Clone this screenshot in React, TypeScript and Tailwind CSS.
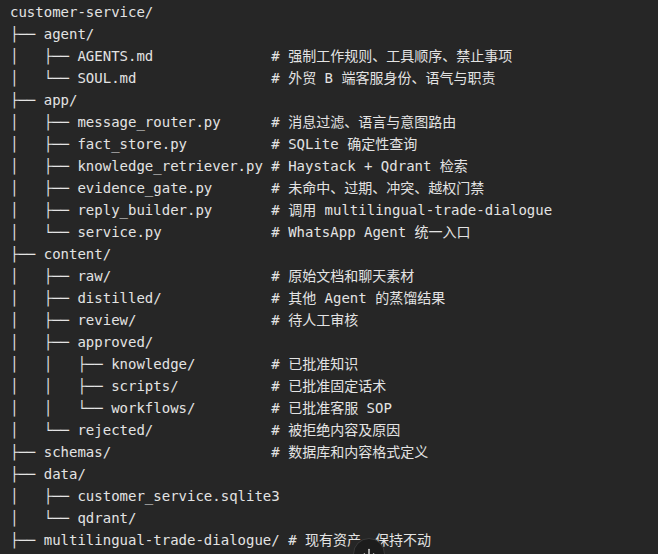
import { ArrowDown } from "lucide-react";

const lines = [
  "customer-service/",
  "├── agent/",
  "│   ├── AGENTS.md              # 强制工作规则、工具顺序、禁止事项",
  "│   └── SOUL.md                # 外贸 B 端客服身份、语气与职责",
  "├── app/",
  "│   ├── message_router.py      # 消息过滤、语言与意图路由",
  "│   ├── fact_store.py          # SQLite 确定性查询",
  "│   ├── knowledge_retriever.py # Haystack + Qdrant 检索",
  "│   ├── evidence_gate.py       # 未命中、过期、冲突、越权门禁",
  "│   ├── reply_builder.py       # 调用 multilingual-trade-dialogue",
  "│   └── service.py             # WhatsApp Agent 统一入口",
  "├── content/",
  "│   ├── raw/                   # 原始文档和聊天素材",
  "│   ├── distilled/             # 其他 Agent 的蒸馏结果",
  "│   ├── review/                # 待人工审核",
  "│   ├── approved/",
  "│   │   ├── knowledge/         # 已批准知识",
  "│   │   ├── scripts/           # 已批准固定话术",
  "│   │   └── workflows/         # 已批准客服 SOP",
  "│   └── rejected/              # 被拒绝内容及原因",
  "├── schemas/                   # 数据库和内容格式定义",
  "├── data/",
  "│   ├── customer_service.sqlite3",
  "│   └── qdrant/",
  "├── multilingual-trade-dialogue/ # 现有资产，保持不动",
  "└── README.md",
];

export default function App() {
  return (
    <div className="relative h-[554px] w-[658px] overflow-hidden bg-[#262626]">
      <pre className="px-[10px] pt-[1px] font-['DejaVu_Sans_Mono','Noto_Sans_CJK_SC',monospace] text-[14px] leading-[22px] text-[#e3e3e3]">
        {lines.join("\n")}
      </pre>
      <button className="absolute left-[353px] top-[538px] flex h-8 w-8 items-start justify-center rounded-full border border-[#3a3a3a] bg-[#1c1c1c] pt-[7px] text-[#e5e5e5]">
        <ArrowDown size={16} strokeWidth={2} />
      </button>
    </div>
  );
}
